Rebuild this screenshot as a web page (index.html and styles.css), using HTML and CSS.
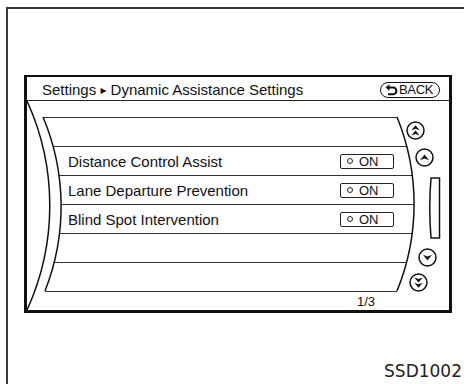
FILE: index.html
```html
<!DOCTYPE html>
<html>
  <head>
    <title>Dynamic Assistance Settings</title>
    <link rel="stylesheet" href="styles.css">
  </head>
  <body>
    <div class="sheet">
      <div class="screen">
        <div class="head">
          <span class="crumb">Settings <span class="sep">&#9656;</span> Dynamic Assistance Settings</span>
          <span class="back">
            <svg class="back-icon" width="13" height="12" viewBox="0 0 13 12">
              <path d="M3.5 3.5 H8 A3.4 3.4 0 0 1 8 10.3 H3" fill="none" stroke="#111" stroke-width="2"/>
              <path d="M0.5 3.5 L4.5 0.3 V6.7 Z" fill="#111"/>
            </svg>BACK</span>
        </div>

        <div class="body">
          <div class="list">
            <div class="rows">
              <div class="row"></div>
              <div class="row">
                <span class="label">Distance Control Assist</span>
                <span class="toggle"><i class="dot"></i>ON</span>
              </div>
              <div class="row">
                <span class="label">Lane Departure Prevention</span>
                <span class="toggle"><i class="dot"></i>ON</span>
              </div>
              <div class="row">
                <span class="label">Blind Spot Intervention</span>
                <span class="toggle"><i class="dot"></i>ON</span>
              </div>
              <div class="row"></div>
              <div class="row"></div>
            </div>
            <div class="page-num">1/3</div>
          </div>

          <!-- curved edges of the list panel -->
          <svg class="arcs" width="422" height="209" viewBox="27 101 422 209">
            <path class="mask" d="M27 101 H43 V117 A230 230 0 0 1 45 291 V310 H27 Z"/>
            <path class="mask" d="M397 101 V117 A230 230 0 0 1 397 291 V310 H449 V101 Z"/>
            <path class="edge" d="M43 117 A230 230 0 0 1 45 291"/>
            <path class="edge" d="M397 117 A230 230 0 0 1 397 291"/>
            <path class="edge" d="M27 101 A251 251 0 0 1 27 310"/>
          </svg>

          <div class="side">
            <svg class="btn btn-top" width="19" height="19" viewBox="0 0 19 19">
              <circle cx="9.5" cy="9.5" r="8.5"/>
              <path d="M5.3 9.3 L9.5 4.2 L13.7 9.3 L9.5 7.7 Z M5.3 14.6 L9.5 9.5 L13.7 14.6 L9.5 13 Z"/>
            </svg>
            <svg class="btn btn-up" width="19" height="19" viewBox="0 0 19 19">
              <circle cx="9.5" cy="9.5" r="8.5"/>
              <path d="M5 12.3 L9.5 6.5 L14 12.3 L9.5 10.5 Z"/>
            </svg>
            <svg class="scroll" width="14" height="62" viewBox="0 0 14 62">
              <path d="M4 1 H12.5 V61 H4 Q1.5 31 4 1 Z"/>
            </svg>
            <svg class="btn btn-down" width="19" height="19" viewBox="0 0 19 19">
              <circle cx="9.5" cy="9.5" r="8.5"/>
              <path d="M5 6.7 L9.5 12.5 L14 6.7 L9.5 8.5 Z"/>
            </svg>
            <svg class="btn btn-bottom" width="19" height="19" viewBox="0 0 19 19">
              <circle cx="9.5" cy="9.5" r="8.5"/>
              <path d="M5.3 4.4 L9.5 9.5 L13.7 4.4 L9.5 6 Z M5.3 9.7 L9.5 14.8 L13.7 9.7 L9.5 11.3 Z"/>
            </svg>
          </div>
        </div>
      </div>

      <div class="code">SSD1002</div>
    </div>
  </body>
</html>
```

FILE: styles.css
```css
/* Navigation screen figure */
* {
  box-sizing: border-box;
}

body {
  margin: 0;
  width: 464px;
  height: 384px;
  overflow: hidden;
  background-color: #fff;
  color: #111;
  font-family: "Liberation Sans", Arial, "DejaVu Sans", sans-serif;
}

.sheet {
  display: flex;
  flex-direction: column;
  height: 377px;
  margin: 7px 0 0 6px;
  border-top: 2px solid #3a3a3a;
  border-left: 2px solid #3a3a3a;
}

.screen {
  display: flex;
  flex-direction: column;
  width: 428px;
  height: 238px;
  margin: 66px 0 0 16px;
  border: 3px solid #111;
  border-top-width: 2px;
}

/* title bar */
.head {
  display: flex;
  align-items: center;
  justify-content: space-between;
  height: 24px;
  padding: 2px 9px 0 15px;
  border-bottom: 1px solid #222;
  font-size: 15px;
}

.sep {
  font-family: "DejaVu Sans", sans-serif;
  font-size: 12px;
  vertical-align: 1px;
}

.back {
  display: flex;
  align-items: center;
  gap: 1px;
  width: 60px;
  height: 16px;
  padding: 0 4px;
  border: 1.5px solid #111;
  border-radius: 8px;
  font-size: 13px;
  letter-spacing: -0.3px;
}

/* list panel */
.body {
  flex: 1;
  display: grid;
  grid-template-columns: 1fr 44px;
}

.list,
.arcs {
  grid-row: 1;
  grid-column: 1 / -1;
}

.list {
  display: flex;
  flex-direction: column;
  padding-top: 16px;
}

.rows {
  border-top: 1px solid #333;
}

.row {
  display: flex;
  align-items: center;
  height: 29px;
  padding: 0 55px 0 41px;
  border-bottom: 1px solid #333;
}

.label {
  flex: 1;
  font-size: 15px;
}

.toggle {
  display: flex;
  align-items: center;
  gap: 6px;
  width: 54px;
  height: 15px;
  padding-left: 6px;
  border: 1px solid #222;
  border-radius: 2px;
  font-size: 13px;
}

.dot {
  width: 6px;
  height: 6px;
  border: 1.2px solid #222;
  border-radius: 50%;
}

.page-num {
  height: 18px;
  padding: 1px 74px 0 0;
  text-align: right;
  font-size: 13px;
  line-height: 17px;
}

.arcs {
  display: block;
}

.mask {
  fill: #fff;
}

.edge {
  fill: none;
  stroke: #111;
  stroke-width: 1.5;
}

/* scroll buttons */
.side {
  grid-row: 1;
  grid-column: 2;
  position: relative;
  z-index: 1;
  display: flex;
  flex-direction: column;
}

.btn circle,
.scroll path {
  fill: #fff;
  stroke: #111;
  stroke-width: 1.5;
}

.btn path {
  fill: #111;
}

.btn-top {
  margin: 20px 0 0 1px;
}

.btn-up {
  margin: 8px 0 0 10px;
}

.scroll {
  margin: 10px 0 0 22px;
}

.btn-down {
  margin: 9px 0 0 13px;
}

.btn-bottom {
  margin: 6px 0 0 4px;
}

/* figure code */
.code {
  margin: auto 2px 3px 0;
  text-align: right;
  font-family: "DejaVu Sans", sans-serif;
  font-size: 17px;
  color: #222;
}
```
